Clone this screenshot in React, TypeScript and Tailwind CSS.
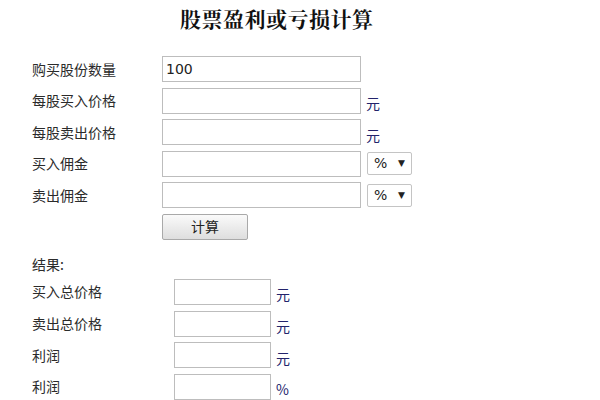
const CJK = "font-['Noto_Sans_CJK_SC',sans-serif]"

function Unit({ children }: { children: React.ReactNode }) {
  return <span className="ml-[5px] pt-[5px] text-[14px] leading-none text-[#23236b]">{children}</span>
}

function UnitSelect() {
  return (
    <div className="ml-[6px] flex h-[23px] w-[45px] items-center justify-between rounded-[2px] border border-[#c4c4c4] bg-white pl-[6px] pr-[6px] font-['DejaVu_Sans',sans-serif] text-[14px] text-[#222]">
      <span>%</span>
      <span className="text-[9px]">▼</span>
    </div>
  )
}

function Field({ width, value }: { width: string; value?: string }) {
  return (
    <input
      readOnly
      defaultValue={value}
      className={`h-[26px] ${width} border border-[#bdbdbd] bg-white px-[3px] font-['DejaVu_Sans',sans-serif] text-[14px] text-[#222] outline-none`}
    />
  )
}

export default function App() {
  const inputs = [
    { label: '购买股份数量', value: '100' },
    { label: '每股买入价格', unit: '元' },
    { label: '每股卖出价格', unit: '元' },
    { label: '买入佣金', select: true },
    { label: '卖出佣金', select: true },
  ]
  const results = [
    { label: '买入总价格', unit: '元' },
    { label: '卖出总价格', unit: '元' },
    { label: '利润', unit: '元' },
    { label: '利润', unit: '%' },
  ]

  return (
    <div className={`h-[400px] w-[600px] overflow-hidden bg-white ${CJK} text-[14px] text-[#2b2b2b]`}>
      <h1 className="pl-[180px] pt-[5px] text-[21px] font-bold leading-[26px] tracking-[0.5px] text-[#111] font-['Noto_Serif_CJK_SC','Noto_Sans_CJK_SC',serif]">
        股票盈利或亏损计算
      </h1>

      {/* 输入 */}
      <div className="mt-[25px] flex flex-col gap-[5.6px] pl-[32px]">
        {inputs.map((r) => (
          <div key={r.label} className="flex h-[26px] items-center">
            <span className="w-[130px]">{r.label}</span>
            <Field width="w-[199px]" value={r.value} />
            {r.unit && <Unit>{r.unit}</Unit>}
            {r.select && <UnitSelect />}
          </div>
        ))}
        <div className="flex h-[26px] pl-[130px]">
          <button className="h-[26px] w-[86px] rounded-[2px] border border-[#a9a9a9] bg-gradient-to-b from-[#fafafa] to-[#dedede] text-[14px] text-[#222]">
            计算
          </button>
        </div>
      </div>

      {/* 结果 */}
      <div className="mt-[14px] pl-[32px]">
        <div className="leading-[20px]">结果:</div>
        <div className="mt-[5px] flex flex-col gap-[5.6px]">
          {results.map((r, i) => (
            <div key={i} className="flex h-[26px] items-center">
              <span className="w-[142px]">{r.label}</span>
              <Field width="w-[97px]" />
              <Unit>{r.unit}</Unit>
            </div>
          ))}
        </div>
      </div>
    </div>
  )
}
